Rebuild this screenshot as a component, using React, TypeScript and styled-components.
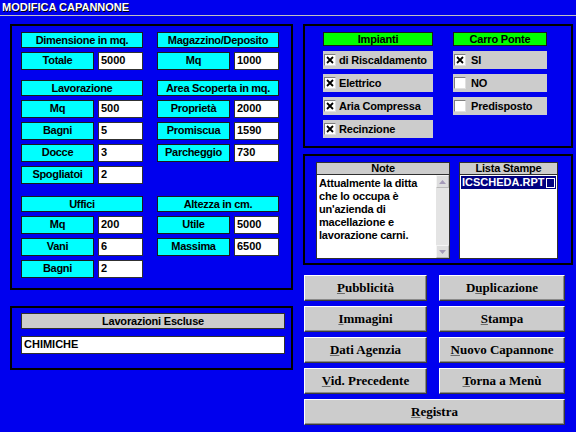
import styled, { createGlobalStyle } from 'styled-components';

const Global = createGlobalStyle`
  html, body {
    margin: 0;
    padding: 0;
    background: #0000ee;
    overflow: hidden;
  }
  * {
    box-sizing: border-box;
  }
`;

const Screen = styled.div`
  width: 576px;
  height: 432px;
  background: #0000ee;
  font-family: "Liberation Sans", Arial, sans-serif;
  font-weight: 700;
  color: #000;
`;

const TitleBar = styled.div`
  height: 16px;
  padding: 1px 0 0 2px;
  border-bottom: 1px solid #c0c0c0;
  color: #fff;
  font-size: 11px;
  line-height: 13px;
  text-shadow: 1px 1px 0 #000;
`;

const Main = styled.div`
  display: flex;
  gap: 10px;
  padding: 8px 0 0 10px;
`;

const Column = styled.div<{ $width: number }>`
  display: flex;
  flex-direction: column;
  width: ${(p) => p.$width}px;
`;

const Panel = styled.div<{ $height: number; $pad: string; $top?: number }>`
  height: ${(p) => p.$height}px;
  margin-top: ${(p) => p.$top || 0}px;
  padding: ${(p) => p.$pad};
  border: 2px solid #000;
  display: flex;
  flex-direction: column;
`;

const GroupRow = styled.div<{ $top?: number }>`
  display: grid;
  grid-template-columns: 122px 122px;
  column-gap: 14px;
  margin-top: ${(p) => p.$top || 0}px;
`;

const Group = styled.div`
  display: flex;
  flex-direction: column;
  gap: 4px;
`;

const CyanHead = styled.div`
  height: 16px;
  background: #00ffff;
  border: 1px solid #1a1a1a;
  font-size: 11px;
  line-height: 14px;
  text-align: center;
  letter-spacing: -0.3px;
`;

const Field = styled.div`
  display: grid;
  grid-template-columns: 1fr 45px;
  gap: 4px;
  height: 18px;
`;

const Label = styled(CyanHead)`
  height: 18px;
  line-height: 14px;
`;

const Input = styled.div`
  background: #fff;
  border: 1px solid #303030;
  font-size: 11px;
  line-height: 15px;
  padding-left: 2px;
  white-space: nowrap;
  overflow: hidden;
`;

const GreyHead = styled.div<{ $h: number }>`
  height: ${(p) => p.$h}px;
  background: #cccccc;
  border: 1px solid #303030;
  font-size: 11px;
  line-height: ${(p) => p.$h - 2}px;
  text-align: center;
  letter-spacing: -0.2px;
`;

const WideInput = styled(Input)`
  height: 18px;
  margin-top: 7px;
`;

const CheckGrid = styled.div`
  display: grid;
  grid-template-columns: 110px 94px;
  column-gap: 20px;
`;

const CheckGroup = styled.div`
  display: flex;
  flex-direction: column;
  gap: 5px;
`;

const GreenHead = styled.div`
  height: 14px;
  background: #00ff00;
  border: 1px solid #1a1a1a;
  font-size: 11px;
  line-height: 12px;
  text-align: center;
  letter-spacing: -0.2px;
`;

const CheckRow = styled.div<{ $gap: number }>`
  height: 18px;
  background: #cccccc;
  display: flex;
  align-items: center;
  gap: ${(p) => p.$gap}px;
  padding-left: 1px;
  font-size: 11px;
  letter-spacing: -0.2px;
  white-space: nowrap;
`;

const Box = styled.span`
  width: 12px;
  height: 12px;
  background: #fff;
  border-top: 1px solid #808080;
  border-left: 1px solid #808080;
  border-right: 1px solid #e0e0e0;
  border-bottom: 1px solid #e0e0e0;
  display: flex;
  align-items: center;
  justify-content: center;
`;

const NoteGrid = styled.div`
  display: grid;
  grid-template-columns: 134px 99px;
  column-gap: 9px;
`;

const ListBox = styled.div`
  display: flex;
  flex-direction: column;
`;

const ListBody = styled.div<{ $column?: boolean }>`
  height: 84px;
  background: #fff;
  border: 1px solid #303030;
  border-top: none;
  display: flex;
  flex-direction: ${(p) => (p.$column ? 'column' : 'row')};
`;

const NoteText = styled.div`
  flex: 1;
  padding: 2px 0 0 2px;
  font-size: 11px;
  line-height: 13px;
  letter-spacing: -0.2px;
`;

const Scroll = styled.div`
  width: 13px;
  background-color: #e4e4e4;
  background-image: radial-gradient(#cfcfcf 0.6px, transparent 0.7px);
  background-size: 2px 2px;
  display: flex;
  flex-direction: column;
  justify-content: space-between;
`;

const Arrow = styled.div`
  height: 13px;
  background: #dedede;
  border: 1px solid #f4f4f4;
  border-right-color: #b8b8b8;
  border-bottom-color: #b8b8b8;
  display: flex;
  align-items: center;
  justify-content: center;
`;

const Selected = styled.div`
  margin: 1px 1px 0;
  height: 13px;
  background: #000080;
  color: #fff;
  font-size: 11px;
  line-height: 13px;
  padding-left: 1px;
  display: flex;
  justify-content: space-between;
  align-items: center;
`;

const Focus = styled.span`
  width: 9px;
  height: 10px;
  border: 1px solid #fff;
  margin-right: 1px;
`;

const Buttons = styled.div`
  margin: 10px 0 0 1px;
  display: grid;
  grid-template-columns: 123px 126px;
  grid-auto-rows: 26px;
  column-gap: 12px;
  row-gap: 5px;
`;

const Button = styled.button<{ $wide?: boolean }>`
  grid-column: ${(p) => (p.$wide ? '1 / span 2' : 'auto')};
  background: #cccccc;
  border: 1px solid;
  border-color: #ffffff #3a3a3a #3a3a3a #ffffff;
  box-shadow: inset -1px -1px 0 #8a8a8a;
  font-family: "Liberation Serif", "Times New Roman", serif;
  font-weight: 700;
  font-size: 13px;
  color: #000;
  padding: 0;
`;

const Key = styled.span`
  text-decoration: underline;
  text-decoration-color: #6a6a6a;
`;

const Cross = () => (
  <svg width="8" height="8" viewBox="0 0 8 8">
    <path d="M1 1L7 7M7 1L1 7" stroke="#000" strokeWidth="1.8" />
  </svg>
);

const Tri = ({ up }: { up?: boolean }) => (
  <svg width="7" height="4" viewBox="0 0 7 4">
    <path d={up ? 'M0 4L3.5 0L7 4Z' : 'M0 0L3.5 4L7 0Z'} fill="#a49ab8" />
  </svg>
);

const groups = [
  [
    { title: 'Dimensione in mq.', rows: [['Totale', '5000']] },
    { title: 'Magazzino/Deposito', rows: [['Mq', '1000']] },
  ],
  [
    {
      title: 'Lavorazione',
      rows: [['Mq', '500'], ['Bagni', '5'], ['Docce', '3'], ['Spogliatoi', '2']],
    },
    {
      title: 'Area Scoperta in mq.',
      rows: [['Proprietà', '2000'], ['Promiscua', '1590'], ['Parcheggio', '730']],
    },
  ],
  [
    { title: 'Uffici', rows: [['Mq', '200'], ['Vani', '6'], ['Bagni', '2']] },
    { title: 'Altezza in cm.', rows: [['Utile', '5000'], ['Massima', '6500']] },
  ],
];

const impianti = ['di Riscaldamento', 'Elettrico', 'Aria Compressa', 'Recinzione'];
const ponte = [
  ['SI', true],
  ['NO', false],
  ['Predisposto', false],
] as const;

// [before, access key, after]
const buttons = [
  ['', 'P', 'ubblicità'],
  ['D', 'u', 'plicazione'],
  ['', 'I', 'mmagini'],
  ['', 'S', 'tampa'],
  ['', 'D', 'ati Agenzia'],
  ['', 'N', 'uovo Capannone'],
  ['', 'V', 'id. Precedente'],
  ['', 'T', 'orna a Menù'],
];

export default function App() {
  return (
    <Screen>
      <Global />
      <TitleBar>MODIFICA CAPANNONE</TitleBar>
      <Main>
        <Column $width={283}>
          <Panel $height={266} $pad="6px 12px 0 9px">
            {groups.map((pair, i) => (
              <GroupRow key={i} $top={i === 0 ? 0 : i === 1 ? 10 : 12}>
                {pair.map((g) => (
                  <Group key={g.title}>
                    <CyanHead>{g.title}</CyanHead>
                    {g.rows.map(([l, v]) => (
                      <Field key={l}>
                        <Label>{l}</Label>
                        <Input>{v}</Input>
                      </Field>
                    ))}
                  </Group>
                ))}
              </GroupRow>
            ))}
          </Panel>
          <Panel $height={64} $top={16} $pad="5px 6px 0 9px">
            <GreyHead $h={16}>Lavorazioni Escluse</GreyHead>
            <WideInput>CHIMICHE</WideInput>
          </Panel>
        </Column>
        <Column $width={270}>
          <Panel $height={124} $pad="6px 0 0 18px">
            <CheckGrid>
              <CheckGroup>
                <GreenHead>Impianti</GreenHead>
                {impianti.map((t) => (
                  <CheckRow key={t} $gap={3}>
                    <Box>
                      <Cross />
                    </Box>
                    {t}
                  </CheckRow>
                ))}
              </CheckGroup>
              <CheckGroup>
                <GreenHead>Carro Ponte</GreenHead>
                {ponte.map(([t, on]) => (
                  <CheckRow key={t} $gap={5}>
                    <Box>{on && <Cross />}</Box>
                    {t}
                  </CheckRow>
                ))}
              </CheckGroup>
            </CheckGrid>
          </Panel>
          <Panel $height={111} $top={6} $pad="6px 0 0 11px">
            <NoteGrid>
              <ListBox>
                <GreyHead $h={13}>Note</GreyHead>
                <ListBody>
                  <NoteText>
                    Attualmente la ditta
                    <br />
                    che lo occupa è
                    <br />
                    un'azienda di
                    <br />
                    macellazione e
                    <br />
                    lavorazione carni.
                  </NoteText>
                  <Scroll>
                    <Arrow>
                      <Tri up />
                    </Arrow>
                    <Arrow>
                      <Tri />
                    </Arrow>
                  </Scroll>
                </ListBody>
              </ListBox>
              <ListBox>
                <GreyHead $h={13}>Lista Stampe</GreyHead>
                <ListBody $column>
                  <Selected>
                    ICSCHEDA.RPT
                    <Focus />
                  </Selected>
                </ListBody>
              </ListBox>
            </NoteGrid>
          </Panel>
          <Buttons>
            {buttons.map(([a, k, b]) => (
              <Button key={a + k + b}>
                {a}
                <Key>{k}</Key>
                {b}
              </Button>
            ))}
            <Button $wide>
              <Key>R</Key>egistra
            </Button>
          </Buttons>
        </Column>
      </Main>
    </Screen>
  );
}
